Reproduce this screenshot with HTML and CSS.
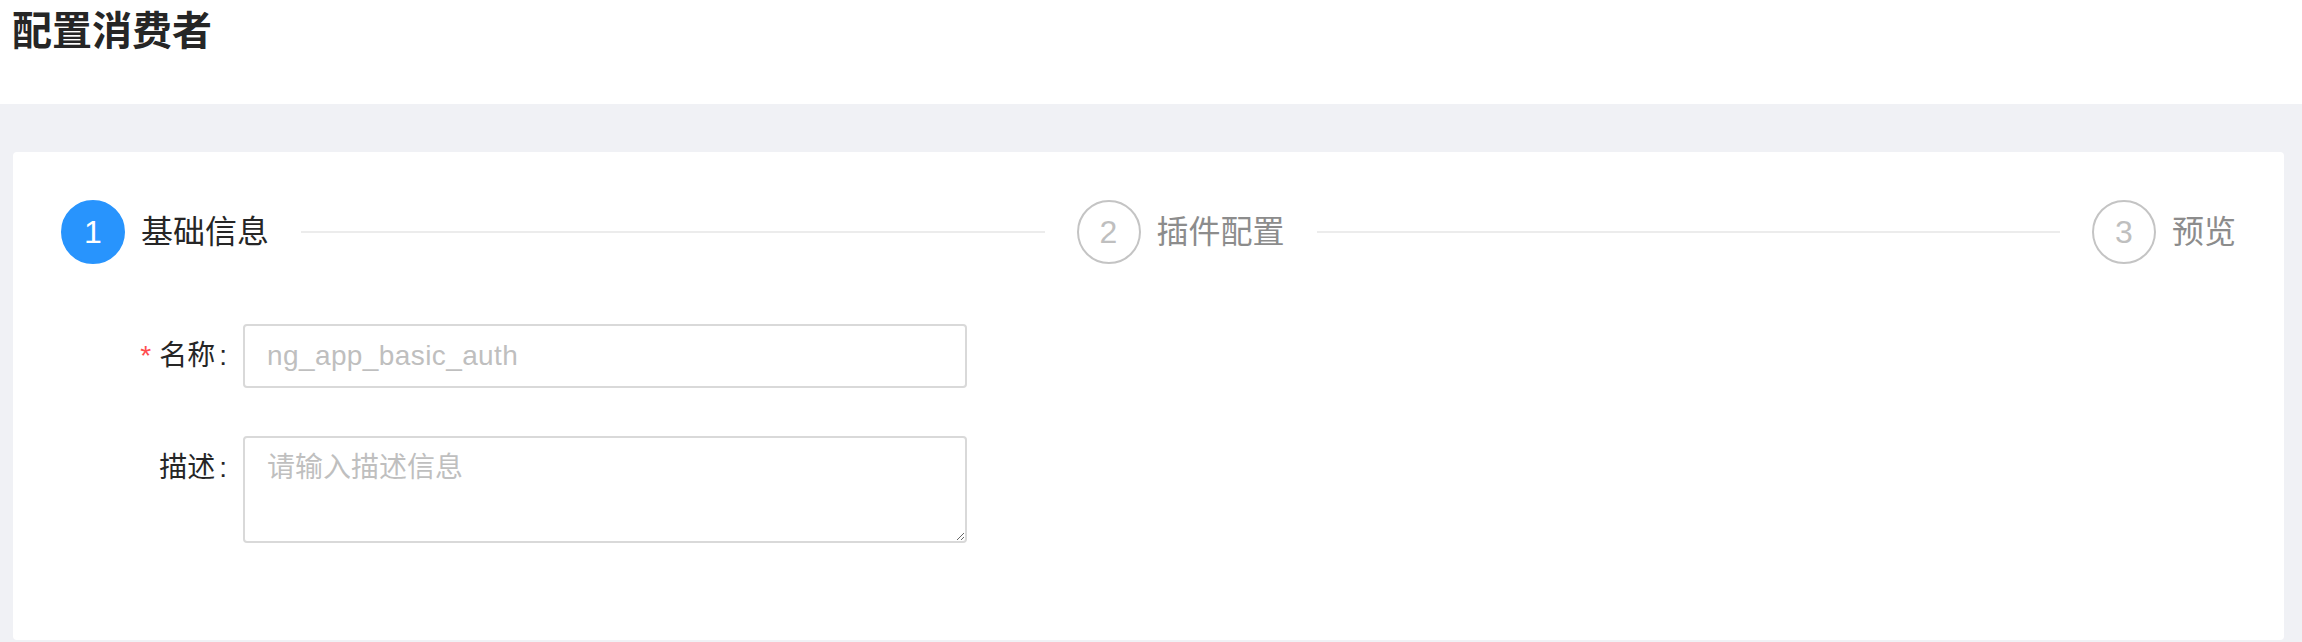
FILE: index.html
```html
<!DOCTYPE html>
<html lang="zh-CN">
<head>
<meta charset="utf-8">
<title>配置消费者</title>
<link rel="stylesheet" href="styles.css">
</head>
<body>
<header class="header">
  <h1 class="title">配置消费者</h1>
</header>
<main class="card">
  <div class="steps">
    <div class="step active">
      <div class="step-icon">1</div>
      <div class="step-title">基础信息</div>
      <div class="step-tail"></div>
    </div>
    <div class="step">
      <div class="step-icon">2</div>
      <div class="step-title">插件配置</div>
      <div class="step-tail"></div>
    </div>
    <div class="step">
      <div class="step-icon">3</div>
      <div class="step-title">预览</div>
    </div>
  </div>
  <form class="form">
    <div class="form-item">
      <label class="form-label required" for="name">名称</label>
      <div class="form-control">
        <input id="name" class="input" type="text" placeholder="ng_app_basic_auth">
      </div>
    </div>
    <div class="form-item">
      <label class="form-label" for="desc">描述</label>
      <div class="form-control">
        <textarea id="desc" class="textarea" placeholder="请输入描述信息"></textarea>
      </div>
    </div>
  </form>
</main>
</body>
</html>
```
FILE: styles.css
```css
html, body {
  margin: 0;
  padding: 0;
}
body {
  background: #f0f1f5;
  font-family: "Liberation Sans", "Noto Sans CJK SC", sans-serif;
  color: #262626;
}
.header {
  background: #fff;
  height: 104px;
  padding: 0 12px;
  box-sizing: border-box;
}
.title {
  margin: 0;
  font-size: 40px;
  line-height: 63px;
  font-weight: 700;
  color: #262626;
}
.card {
  margin: 48px 18px 0 13px;
  background: #fff;
  border-radius: 4px;
  padding: 48px 48px 49px;
  display: block;
}
.steps {
  display: flex;
  align-items: center;
  margin-bottom: 60px;
}
.step {
  display: flex;
  align-items: center;
  flex: 1 1 0;
  min-width: 0;
}
.step:last-child {
  flex: none;
}
.step-icon {
  width: 64px;
  height: 64px;
  box-sizing: border-box;
  border: 2px solid #c4c4c4;
  border-radius: 50%;
  display: flex;
  align-items: center;
  justify-content: center;
  font-size: 32px;
  color: #bfbfbf;
  flex: none;
}
.step.active .step-icon {
  background: #2894fd;
  border-color: #2894fd;
  color: #fff;
}
.step-title {
  margin-left: 16px;
  font-size: 32px;
  line-height: 64px;
  color: #8c8c8c;
  white-space: nowrap;
}
.step.active .step-title {
  color: #262626;
}
.step-tail {
  flex: 1 1 0;
  height: 2px;
  background: #ececec;
  margin: 0 32px;
}
.form-item {
  display: flex;
  align-items: flex-start;
  margin-bottom: 48px;
}
.form-item:last-child {
  margin-bottom: 48px;
}
.form-label {
  width: 182px;
  flex: none;
  text-align: right;
  font-size: 28px;
  line-height: 64px;
  color: #262626;
  white-space: nowrap;
}
.form-label::after {
  content: ":";
  margin: 0 16px 0 4px;
}
.form-label.required::before {
  content: "*";
  color: #ff4d4f;
  margin-right: 8px;
}
.input,
.textarea {
  width: 724px;
  box-sizing: border-box;
  border: 2px solid #d9d9d9;
  border-radius: 4px;
  font-family: "Liberation Sans", "Noto Sans CJK SC", sans-serif;
  font-size: 28px;
  color: #262626;
  background: #fff;
  outline: none;
  margin: 0;
}
.input {
  height: 64px;
  padding: 0 22px;
  letter-spacing: 0.4px;
}
.textarea {
  display: block;
  height: 107px;
  padding: 8px 22px;
  line-height: 44px;
}
.input::placeholder,
.textarea::placeholder {
  color: #bfbfbf;
}
```
